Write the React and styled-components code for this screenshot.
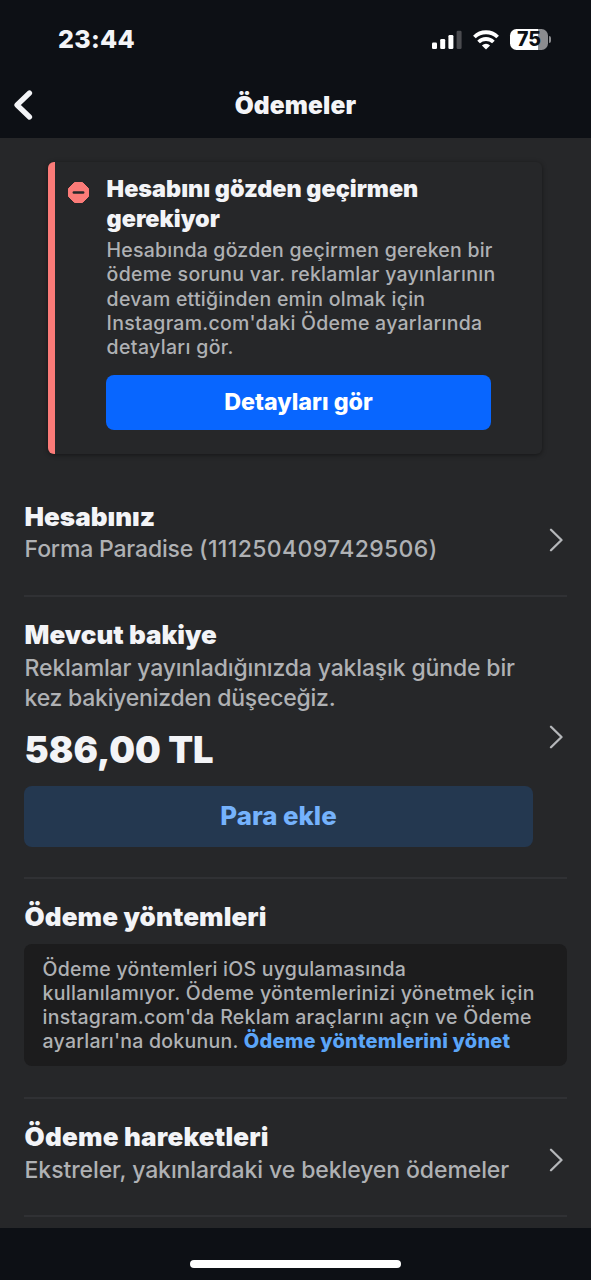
import React from 'react';
import styled, { createGlobalStyle } from 'styled-components';

const GlobalStyle = createGlobalStyle`
  * { box-sizing: border-box; }
  body { margin: 0; background: #0d1015; }
`;

const Screen = styled.div`
  display: flex;
  flex-direction: column;
  width: 591px;
  height: 1280px;
  overflow: hidden;
  background: #0d1015;
  color: #f3f4f7;
  font-family: Inter, 'Noto Sans', sans-serif;
`;

const StatusBar = styled.div`
  display: flex;
  align-items: center;
  justify-content: space-between;
  height: 72px;
  padding: 7px 40px 0 58px;
`;

const Time = styled.span`
  margin-bottom: 2px;
  font-size: 25px;
  font-weight: 800;
  line-height: 30px;
  letter-spacing: 0.3px;
`;

const StatusIcons = styled.div`
  display: flex;
  align-items: center;
  gap: 11px;
`;

const Battery = styled.div`
  display: flex;
  align-items: center;
  gap: 1px;
`;

const BatteryBody = styled.div`
  width: 38px;
  height: 21px;
  border-radius: 6.5px;
  background: linear-gradient(90deg, #fff 75%, #8b8c8f 75%);
  color: #0d1015;
  font-size: 19.5px;
  font-weight: 800;
  line-height: 21px;
  text-align: center;
`;

const BatteryTip = styled.div`
  width: 2px;
  height: 7px;
  border-radius: 0 2px 2px 0;
  background: #8b8c8f;
`;

const NavBar = styled.header`
  display: grid;
  grid-template-columns: 60px 1fr 60px;
  align-items: center;
  height: 66px;
`;

const BackButton = styled.button`
  display: flex;
  padding: 0 0 0 13px;
  border: 0;
  background: none;
`;

const NavTitle = styled.h1`
  margin: 0;
  font-size: 24.5px;
  font-weight: 900;
  line-height: 30px;
  text-align: center;
  letter-spacing: 0.15px;
`;

const Content = styled.main`
  height: 1090px;
  padding: 24px 24px 0;
  background: #262729;
`;

const Alert = styled.section`
  display: flex;
  width: 494px;
  height: 292px;
  margin: 0 24px 24px;
  padding: 12px 0 0 14px;
  border-left: 7px solid #fb7b78;
  border-radius: 6px;
  box-shadow: 0 1px 5px rgba(0, 0, 0, 0.45);
`;

const AlertIcon = styled.svg`
  flex: none;
  margin: 7px 16px 0 -2px;
`;

const AlertBody = styled.div`
  display: flex;
  flex-direction: column;
  width: 385px;
`;

const Heading = styled.h2`
  margin: 0;
  font-size: ${(p) => p.$size || 26}px;
  font-weight: 900;
  line-height: 30px;
`;

const Text = styled.p`
  margin: 0;
  color: #afb1b4;
  font-size: ${(p) => (p.$small ? 19.5 : 23)}px;
  font-weight: 500;
  line-height: ${(p) => (p.$small ? 24.3 : 30)}px;
`;

const AlertText = styled(Text)`
  margin-top: 4px;
`;

const Line = styled.span`
  display: block;
  padding-left: 0.6px;
  white-space: nowrap;
  letter-spacing: ${(p) => p.$track || 0}px;
`;

const AccountId = styled.span`
  letter-spacing: 0.36px;
`;

const Button = styled.button`
  display: flex;
  align-items: center;
  justify-content: center;
  width: ${(p) => p.$width}px;
  height: ${(p) => p.$height}px;
  padding: 0 0 1px;
  border: 0;
  border-radius: 8px;
  background: ${(p) => (p.$primary ? '#0866ff' : '#243850')};
  color: ${(p) => (p.$primary ? '#fff' : '#75b2fc')};
  font-family: inherit;
  font-size: ${(p) => (p.$primary ? 23.3 : 25.8)}px;
  font-weight: 800;
`;

const AlertAction = styled(Button)`
  margin-top: 15.5px;
`;

const Row = styled.section`
  display: flex;
  align-items: center;
  justify-content: space-between;
  width: 543px;
  height: ${(p) => p.$height}px;
  padding: ${(p) => p.$drop || 0}px 4px 0 0;
  border-bottom: 2px solid #303134;
`;

const RowText = styled.div`
  display: flex;
  flex-direction: column;
  align-self: flex-start;
  gap: 2.5px;
  padding-top: ${(p) => 23 - (p.$lift || 0)}px;
`;

const Amount = styled.div`
  margin-top: 11px;
  padding-left: 0.6px;
  font-size: 36.3px;
  font-weight: 900;
  line-height: 48px;
`;

const AddMoney = styled(Button)`
  margin-top: 9.5px;
  padding: 0 0 2px;
`;

const Note = styled.div`
  width: 543px;
  height: 122px;
  margin-top: 9.5px;
  padding: 12.5px 18px;
  border-radius: 8px;
  background: #1c1c1d;
`;

const Link = styled.a`
  color: #5ba5f8;
  font-size: 20px;
  font-weight: 800;
  line-height: 1;
  letter-spacing: 0.21px;
`;

const HomeArea = styled.footer`
  display: flex;
  justify-content: center;
  height: 52px;
  padding-top: 32px;
`;

const HomeIndicator = styled.div`
  width: 211px;
  height: 8px;
  border-radius: 4px;
  background: #fff;
`;

const Chevron = () => (
  <svg width="14" height="24" viewBox="0 0 14 24" fill="none">
    <path d="M2 1.7 12.500 12 2 22.3" stroke="#b5b7ba" strokeWidth="2.3" strokeLinecap="round" strokeLinejoin="round" />
  </svg>
);

const Signal = () => (
  <svg width="30" height="20" viewBox="0 0 30 20">
    <rect x="0" y="12.5" width="5" height="6.5" rx="1.3" fill="#fff" />
    <rect x="8.2" y="9" width="5" height="10" rx="1.3" fill="#fff" />
    <rect x="16.4" y="5" width="5" height="14" rx="1.3" fill="#fff" />
    <rect x="24.6" y="0.8" width="5" height="18.2" rx="1.3" fill="#4a4b4f" />
  </svg>
);

const Wifi = () => (
  <svg width="26" height="20" viewBox="0 0 26 20" fill="none" stroke="#fff" strokeWidth="3.8">
    <path d="M1.4 7a16.600 16.600 0 0 1 23.200 0" />
    <path d="M5.600 12a10.600 10.600 0 0 1 14.800 0" />
    <path d="M13 19.600 8.900 15.500a5.900 5.900 0 0 1 8.200 0Z" fill="#fff" stroke="none" />
  </svg>
);

export default function App() {
  return (
    <Screen>
      <GlobalStyle />
      <StatusBar>
        <Time>23:44</Time>
        <StatusIcons>
          <Signal />
          <Wifi />
          <Battery>
            <BatteryBody>75</BatteryBody>
            <BatteryTip />
          </Battery>
        </StatusIcons>
      </StatusBar>
      <NavBar>
        <BackButton aria-label="Geri">
          <svg width="20" height="32" viewBox="0 0 20 32" fill="none">
            <path d="M16.5 4 4 16l12.500 12" stroke="#f3f4f7" strokeWidth="5.2" strokeLinecap="round" strokeLinejoin="round" />
          </svg>
        </BackButton>
        <NavTitle>Ödemeler</NavTitle>
      </NavBar>
      <Content>
        <Alert>
          <AlertIcon width="23" height="23" viewBox="0 0 23 23">
            <path d="M7.500 1.500h8L21.500 7.500v8L15.500 21.500h-8L1.500 15.500v-8Z" fill="#fb7b78" stroke="#fb7b78" strokeWidth="1" strokeLinejoin="round" />
            <path d="M6.800 11.500h9.400" stroke="#262729" strokeWidth="2.400" strokeLinecap="round" />
          </AlertIcon>
          <AlertBody>
            <Heading $size={23.4}>
              <Line>Hesabını gözden geçirmen</Line>
              <Line>gerekiyor</Line>
            </Heading>
            <AlertText $small>
              <Line $track={0.22}>Hesabında gözden geçirmen gereken bir</Line>
              <Line $track={0.29}>ödeme sorunu var. reklamlar yayınlarının</Line>
              <Line $track={0.25}>devam ettiğinden emin olmak için</Line>
              <Line $track={0.27}>Instagram.com'daki Ödeme ayarlarında</Line>
              <Line $track={0.35}>detayları gör.</Line>
            </AlertText>
            <AlertAction $primary $width={385} $height={55}>Detayları gör</AlertAction>
          </AlertBody>
        </Alert>
        <Row $height={119} $drop={6}>
          <RowText $lift={5.5}>
            <Heading><Line>Hesabınız</Line></Heading>
            <Text><Line $track={-0.17}>Forma Paradise <AccountId>(1112504097429506)</AccountId></Line></Text>
          </RowText>
          <Chevron />
        </Row>
        <Row $height={282}>
          <RowText>
            <Heading><Line>Mevcut bakiye</Line></Heading>
            <Text>
              <Line $track={-0.15}>Reklamlar yayınladığınızda yaklaşık günde bir</Line>
              <Line $track={-0.24}>kez bakiyenizden düşeceğiz.</Line>
            </Text>
            <Amount>586,00 TL</Amount>
            <AddMoney $width={509} $height={61}>Para ekle</AddMoney>
          </RowText>
          <Chevron />
        </Row>
        <Row $height={220}>
          <RowText>
            <Heading><Line $track={0.1}>Ödeme yöntemleri</Line></Heading>
            <Note>
              <Text $small>
                <Line $track={0.25}>Ödeme yöntemleri iOS uygulamasında</Line>
                <Line $track={0.3}>kullanılamıyor. Ödeme yöntemlerinizi yönetmek için</Line>
                <Line $track={0.26}>instagram.com'da Reklam araçlarını açın ve Ödeme</Line>
                <Line $track={0.24}>ayarları'na dokunun. <Link>Ödeme yöntemlerini yönet</Link></Line>
              </Text>
            </Note>
          </RowText>
        </Row>
        <Row $height={118} $drop={6}>
          <RowText $lift={6}>
            <Heading><Line $track={0.2}>Ödeme hareketleri</Line></Heading>
            <Text><Line $track={-0.09}>Ekstreler, yakınlardaki ve bekleyen ödemeler</Line></Text>
          </RowText>
          <Chevron />
        </Row>
      </Content>
      <HomeArea>
        <HomeIndicator />
      </HomeArea>
    </Screen>
  );
}
